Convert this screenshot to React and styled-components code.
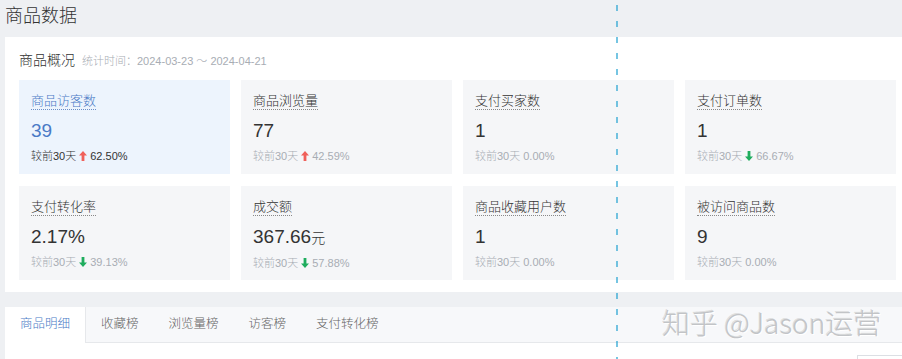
import React from 'react';
import styled, { createGlobalStyle } from 'styled-components';

const GlobalStyle = createGlobalStyle`
  html, body {
    margin: 0;
    padding: 0;
    background: #eef0f3;
  }
  body {
    font-family: "Liberation Sans", "Noto Sans CJK SC", sans-serif;
    font-weight: 300;
    color: #333;
  }
`;

const metrics = [
  { label: '商品访客数', value: '39', trend: 'up', rate: '62.50%', active: true },
  { label: '商品浏览量', value: '77', trend: 'up', rate: '42.59%' },
  { label: '支付买家数', value: '1', rate: '0.00%' },
  { label: '支付订单数', value: '1', trend: 'down', rate: '66.67%' },
  { label: '支付转化率', value: '2.17%', trend: 'down', rate: '39.13%' },
  { label: '成交额', value: '367.66', unit: '元', trend: 'down', rate: '57.88%' },
  { label: '商品收藏用户数', value: '1', rate: '0.00%' },
  { label: '被访问商品数', value: '9', rate: '0.00%' }
];

const tabs = ['商品明细', '收藏榜', '浏览量榜', '访客榜', '支付转化榜'];

const Arrow = ({ dir }) => (
  <svg width="8" height="10" viewBox="0 0 8 10">
    {dir === 'up' ? (
      <path d="M4 0 L8 4.5 L5.4 4.5 L5.4 10 L2.6 10 L2.6 4.5 L0 4.5 Z" fill="#f0605a" />
    ) : (
      <path d="M4 10 L8 5.5 L5.4 5.5 L5.4 0 L2.6 0 L2.6 5.5 L0 5.5 Z" fill="#1fad5e" />
    )}
  </svg>
);

const MetricCard = ({ label, value, unit, trend, rate, active }) => (
  <Card $active={active}>
    <Label $active={active}>{label}</Label>
    <Value $active={active}>
      {value}
      {unit && <Unit>{unit}</Unit>}
    </Value>
    <Compare $active={active}>
      较前30天
      {trend && <Arrow dir={trend} />}
      <span>{rate}</span>
    </Compare>
  </Card>
);

export default function App() {
  return (
    <Page>
      <GlobalStyle />
      <Title>商品数据</Title>
      <Panel>
        <PanelHead>
          <PanelTitle>商品概况</PanelTitle>
          <Period>统计时间：2024-03-23 ～ 2024-04-21</Period>
        </PanelHead>
        <Grid>
          {metrics.map(m => (
            <MetricCard key={m.label} {...m} />
          ))}
        </Grid>
      </Panel>
      <TabPanel>
        <TabBar>
          {tabs.map((t, i) => (
            <Tab key={t} $active={i === 0}>
              {t}
            </Tab>
          ))}
        </TabBar>
        <TabBody>
          <SmallBox />
        </TabBody>
      </TabPanel>
      <GuideLine width="2" height="359">
        <line x1="1" y1="0" x2="1" y2="359" stroke="#1c9fd0" strokeWidth="1.2" strokeDasharray="6 10" strokeDashoffset="-5" />
      </GuideLine>
      <Watermark>知乎 @Jason运营</Watermark>
    </Page>
  );
}

const Page = styled.div`
  position: relative;
  width: 902px;
  height: 359px;
  overflow: hidden;
  background: #eef0f3;
`;

const Title = styled.h1`
  margin: 0;
  padding: 3px 0 0 5px;
  height: 37px;
  box-sizing: border-box;
  font-size: 18px;
  font-weight: 300;
  line-height: 26px;
  color: #333;
`;

const Panel = styled.div`
  margin-left: 5px;
  background: #fff;
  padding: 12px 0 11px 14px;
  height: 255px;
  box-sizing: border-box;
`;

const PanelHead = styled.div`
  display: flex;
  align-items: baseline;
  gap: 7px;
  height: 20px;
  margin-bottom: 11px;
`;

const PanelTitle = styled.span`
  font-size: 14px;
  color: #333;
`;

const Period = styled.span`
  font-size: 11px;
  color: #a8adb4;
`;

const Grid = styled.div`
  display: grid;
  grid-template-columns: repeat(4, 211px);
  grid-auto-rows: 94px;
  column-gap: 11px;
  row-gap: 12px;
`;

const Card = styled.div`
  background: ${p => (p.$active ? '#edf4fd' : '#f5f6f8')};
  padding: 12px 12px 0;
  box-sizing: border-box;
  display: flex;
  flex-direction: column;
  align-items: flex-start;
`;

const Label = styled.span`
  font-size: 13px;
  line-height: 17px;
  color: ${p => (p.$active ? '#4a7ac6' : '#333')};
  border-bottom: 1px dotted ${p => (p.$active ? '#6a8ec8' : '#888')};
`;

const Value = styled.div`
  margin-top: 9px;
  font-size: 19px;
  line-height: 24px;
  color: ${p => (p.$active ? '#4a7ac6' : '#333')};
`;

const Unit = styled.span`
  font-size: 14px;
`;

const Compare = styled.div`
  margin-top: 6px;
  display: flex;
  align-items: center;
  gap: 3px;
  font-size: 11px;
  line-height: 14px;
  color: ${p => (p.$active ? '#333' : '#a8adb4')};
`;

const TabPanel = styled.div`
  margin: 15px 0 0 5px;
  background: #fff;
  height: 53px;
`;

const TabBar = styled.div`
  display: flex;
  height: 36px;
  background: #f7f8fa;
  border-bottom: 1px solid #e6e8eb;
  box-sizing: border-box;
`;

const Tab = styled.div`
  padding: 0 15px;
  font-size: 12.5px;
  line-height: 35px;
  color: ${p => (p.$active ? '#4a7ac6' : '#666')};
  background: ${p => (p.$active ? '#fff' : 'transparent')};
  border-right: ${p => (p.$active ? '1px solid #e6e8eb' : 'none')};
  height: 36px;
  box-sizing: border-box;
`;

const TabBody = styled.div`
  display: flex;
  justify-content: flex-end;
  padding-top: 12px;
`;

const SmallBox = styled.div`
  width: 44px;
  height: 20px;
  border: 1px solid #dcdfe4;
  border-right: none;
`;

const GuideLine = styled.svg`
  position: absolute;
  left: 616px;
  top: 0;
  display: block;
`;

const Watermark = styled.div`
  position: absolute;
  left: 662px;
  top: 305px;
  font-family: "Noto Sans CJK SC", sans-serif;
  font-size: 28px;
  font-weight: 300;
  line-height: 34px;
  color: #c2c4c7;
  text-shadow: 1px 1px 0 #fff, -1px -1px 0 rgba(120, 120, 120, 0.2);
  white-space: nowrap;
`;
